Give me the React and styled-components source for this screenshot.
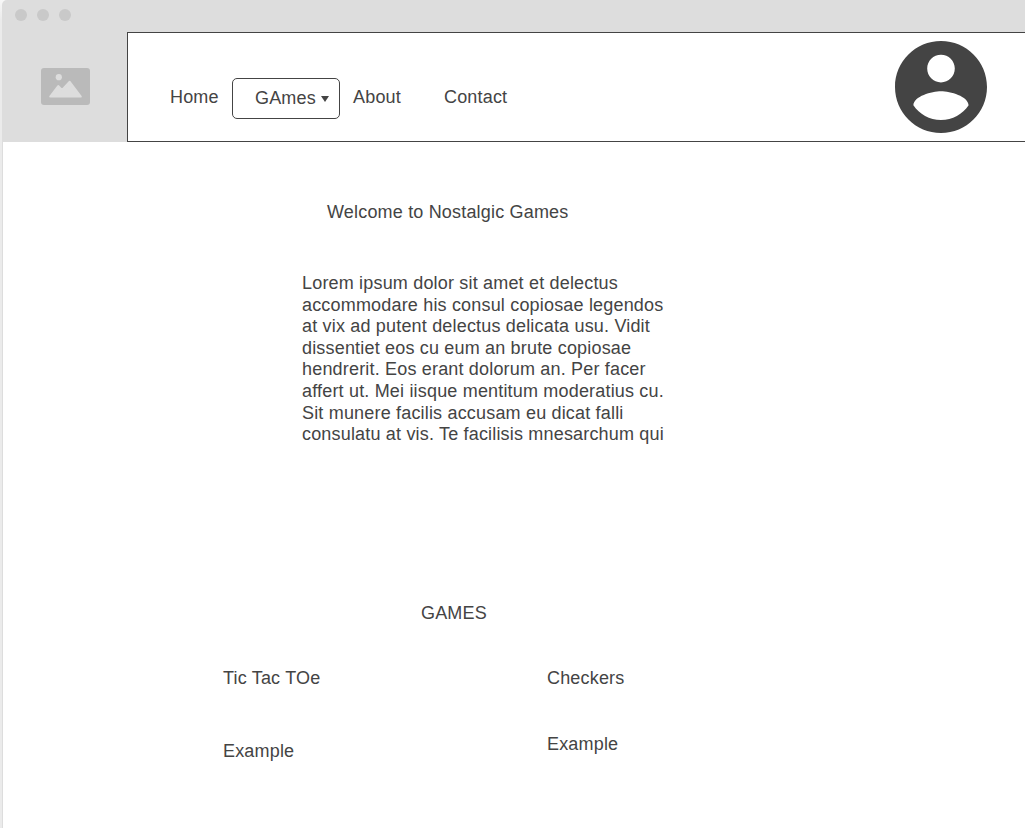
import React from "react";
import styled, { createGlobalStyle } from "styled-components";

const Global = createGlobalStyle`
  * { box-sizing: border-box; }
  body { margin: 0; background: #fff; overflow: hidden; }
`;
const Window = styled.div`
  height: 828px;
  width: 1025px;
  padding-left: 2px;
  overflow: hidden;
  background: linear-gradient(#f8f8f8, #ebebeb 20px);
  font: 18px/22px "Liberation Sans", Arial, sans-serif;
  letter-spacing: 0.18px;
  color: #444;
`;
const TitleBar = styled.div`
  height: 32px;
  display: flex;
  gap: 10px;
  padding: 9px 13px;
  background: #ddd;
  border-top-left-radius: 5px;
`;
const Dot = styled.span`
  width: 12px;
  height: 12px;
  border-radius: 50%;
  background: #c9c9c9;
`;
const Header = styled.header`
  display: flex;
  height: 110px;
  background: #fff;
`;
const Logo = styled.div`
  width: 125px;
  padding: 36px 0 0 39px;
  background: #ddd;
`;
const Nav = styled.nav`
  flex: 1;
  display: flex;
  border: 1px solid #444;
  border-right: 0;
  padding: 8px 38px 0 42px;
`;
const NavItem = styled.a`
  margin: 45px 0 0;
  width: ${(p) => p.$w}px;
`;
const Dropdown = styled.button`
  display: flex;
  align-items: center;
  width: 108px;
  height: 41px;
  margin: 37px 13px 0 0;
  padding: 0 0 0 22px;
  gap: 5px;
  border: 1px solid #444;
  border-radius: 5px;
  background: #fff;
  font: inherit;
  letter-spacing: inherit;
  color: inherit;
`;
const DropdownLabel = styled.span`
  padding-bottom: 2px;
`;
const Avatar = styled.svg`
  margin-left: auto;
`;
const Page = styled.main`
  height: 686px;
  border-left: 1px solid #ddd;
  padding-top: 59px;
  background: #fff;
`;
const Title = styled.h1`
  margin: 0 0 50px 324px;
  font: inherit;
`;
const Copy = styled.p`
  margin: 0 0 156px 299px;
  line-height: 21.6px;
  white-space: nowrap;
`;
const GamesTitle = styled.h2`
  margin: 0 0 43px 418px;
  font: inherit;
`;
const Games = styled.section`
  display: grid;
  grid-template-columns: 324px 324px;
  padding-left: 220px;
`;
const Game = styled.div`
  display: flex;
  flex-direction: column;
  gap: ${(p) => p.$gap}px;
`;

const copy = [
  "Lorem ipsum dolor sit amet et delectus",
  "accommodare his consul copiosae legendos",
  "at vix ad putent delectus delicata usu. Vidit",
  "dissentiet eos cu eum an brute copiosae",
  "hendrerit. Eos erant dolorum an. Per facer",
  "affert ut. Mei iisque mentitum moderatius cu.",
  "Sit munere facilis accusam eu dicat falli",
  "consulatu at vis. Te facilisis mnesarchum qui",
];

export default function App() {
  return (
    <>
      <Global />
      <Window>
        <TitleBar><Dot /><Dot /><Dot /></TitleBar>
        <Header>
          <Logo>
            <svg width="49" height="37" viewBox="0 0 49 37">
              <rect width="49" height="37" rx="3" fill="#bababa" />
              <circle cx="17.8" cy="9.2" r="3.1" fill="#ddd" />
              <path d="M9.2 28.6 L17.2 18 L21 22 L28.7 13.8 L39.8 28.6Z" fill="#ddd" stroke="#ddd" strokeWidth="2" strokeLinejoin="round" />
            </svg>
          </Logo>
          <Nav>
            <NavItem $w={62}>Home</NavItem>
            <Dropdown>
              <DropdownLabel>GAmes</DropdownLabel>
              <svg width="8" height="6" viewBox="0 0 8 6"><path d="M0 0H8L4 6Z" fill="#444" /></svg>
            </Dropdown>
            <NavItem $w={91}>About</NavItem>
            <NavItem $w={80}>Contact</NavItem>
            <Avatar width="92" height="92" viewBox="2 2 20 20">
              <path fill="#444" d="M12 2C6.48 2 2 6.48 2 12s4.48 10 10 10 10-4.48 10-10S17.52 2 12 2zm0 3c1.66 0 3 1.34 3 3s-1.34 3-3 3-3-1.34-3-3 1.34-3 3-3zm0 14.2c-2.5 0-4.71-1.28-6-3.22.03-1.99 4-3.08 6-3.08 1.99 0 5.97 1.09 6 3.08-1.29 1.94-3.5 3.22-6 3.22z" />
            </Avatar>
          </Nav>
        </Header>
        <Page>
          <Title>Welcome to Nostalgic Games</Title>
          <Copy>{copy.map((line) => <React.Fragment key={line}>{line}<br /></React.Fragment>)}</Copy>
          <GamesTitle>GAMES</GamesTitle>
          <Games>
            <Game $gap={51}><span>Tic Tac TOe</span><span>Example</span></Game>
            <Game $gap={44}><span>Checkers</span><span>Example</span></Game>
          </Games>
        </Page>
      </Window>
    </>
  );
}
